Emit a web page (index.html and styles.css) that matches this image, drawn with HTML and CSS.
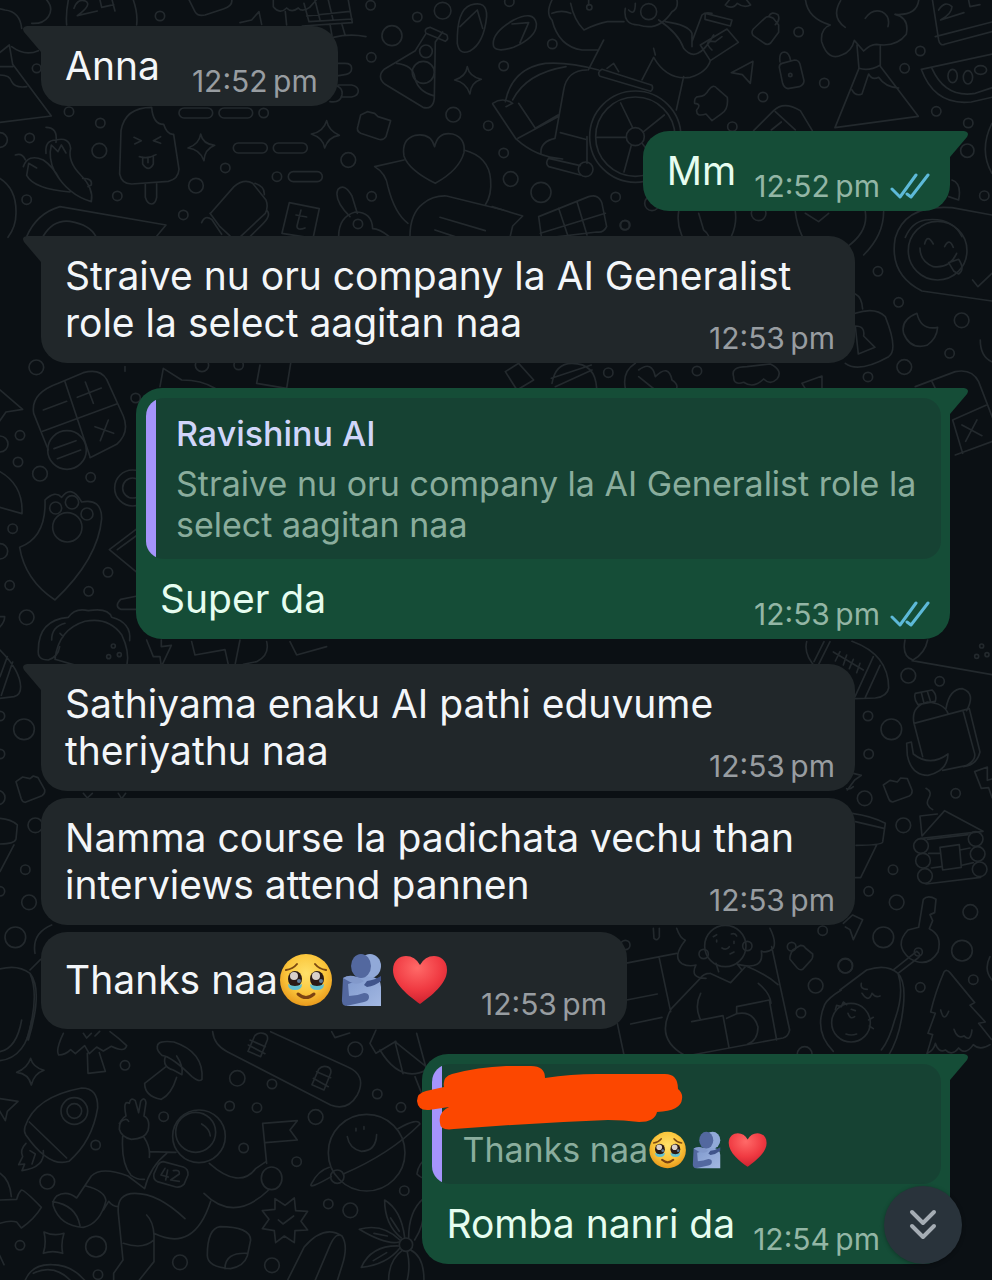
FILE: index.html
```html
<!DOCTYPE html>
<html lang="ta-Latn">
<head>
    <meta charset="UTF-8">
    <meta name="viewport" content="width=device-width, initial-scale=1.0">
    <title>Chat</title>
    <link rel="stylesheet" href="styles.css">
</head>
<body>
    <!-- Shared icons -->
    <svg class="defs" aria-hidden="true">
        <defs>
            <radialGradient id="skin" cx="50%" cy="38%" r="62%">
                <stop offset="0" stop-color="#ffe16a"/>
                <stop offset="0.6" stop-color="#fbc63c"/>
                <stop offset="1" stop-color="#e99a1c"/>
            </radialGradient>
            <radialGradient id="red" cx="45%" cy="25%" r="75%">
                <stop offset="0" stop-color="#ff6a68"/>
                <stop offset="0.6" stop-color="#f03a42"/>
                <stop offset="1" stop-color="#cf2230"/>
            </radialGradient>
            <linearGradient id="light" x1="0" y1="0" x2="1" y2="1">
                <stop offset="0" stop-color="#7e98cd"/>
                <stop offset="1" stop-color="#a3b8e2"/>
            </linearGradient>
        </defs>
        <symbol id="ticks" viewBox="0 0 40 26">
            <path d="M2 16l8 8L26 2M17 21l4 3L38 2" fill="none" stroke="#5db9d8" stroke-width="3" stroke-linecap="round" stroke-linejoin="round"/>
        </symbol>
        <symbol id="tearful" viewBox="0 0 57 54">
            <circle cx="28" cy="27" r="26" fill="url(#skin)"/>
            <path d="M8 17q7-1 11-6M48 17q-7-1-11-6" fill="none" stroke="#7c4a12" stroke-width="2" stroke-linecap="round"/>
            <ellipse cx="17" cy="26" rx="7" ry="8" fill="#2a1a16"/>
            <ellipse cx="39" cy="26" rx="7" ry="8" fill="#2a1a16"/>
            <circle cx="16" cy="23" r="4" fill="#d9d0ca"/>
            <circle cx="38" cy="23" r="4" fill="#d9d0ca"/>
            <circle cx="21" cy="28" r="2" fill="#5f7d9c"/>
            <circle cx="43" cy="28" r="2" fill="#5f7d9c"/>
            <path d="M10 31q7 4 14 0q0 6-7 6t-7-6zM32 31q7 4 14 0q0 6-7 6t-7-6z" fill="#62bfd0"/>
            <path d="M20 41q8 7 16 0" fill="none" stroke="#7c4312" stroke-width="3" stroke-linecap="round"/>
        </symbol>
        <symbol id="hug" viewBox="0 0 57 54">
            <ellipse cx="35" cy="13" rx="11" ry="12" fill="#91a9d8"/>
            <path d="M10 26q14-4 28-2q8 2 8 10v19H12z" fill="url(#light)"/>
            <ellipse cx="26" cy="13" rx="10" ry="12" fill="#53689f"/>
            <path d="M8 25q5-3 12-1l-1 5-6 2 1 12q8 0 15-3q5 0 5 4t-5 5l-18 4q-5-1-4-8z" fill="#53689f"/>
            <path d="M8 25q6-4 14-1l7 4q-6 5-14 1z" fill="#8299cb"/>
            <path d="M29 32l3-4q8-1 14-5v5q-6 5-14 6z" fill="#40548b"/>
        </symbol>
        <symbol id="heart" viewBox="0 0 57 54">
            <path d="M28 51C17 43 1 31 1 17C1 7 8 3 14 3q9 0 14 9q5-9 14-9c6 0 13 4 13 14c0 14-16 26-27 34z" fill="url(#red)"/>
        </symbol>
    </svg>

    <main class="chat">
        <!-- Wallpaper doodles -->
        <svg class="wallpaper" aria-hidden="true">
            <!-- upper left -->
            <g transform="scale(.3333)">
                <path d="M-40 30q20-10 55 0q45 5 50 55M130-10q35 30 15 60q-15 22-50 20M205 0q-8 40-5 75M400 0q14 40 10 75M222 25q10-30 34-22q22 10-24 44l60-14M300 0l5 22 36-8M335-5l10 38M565-5l20 40q8 15 30 10l55-18q30-10 25-30M720 68l35-8 22-25 8 38M820 0v20q20 25 40 4q15 16 35 0q12 14 34-2l20-22M856 35l4 40M912 10l15 55 130-8M945 0l15 60M985 0l14 58M920 48l130-14M1045 0l12 68-150 10M990 72l6 35M1025 70l10 34M1000 112q50-12 98-2"/>
                <circle cx="480" cy="48" r="14"/><circle cx="1112" cy="16" r="14"/><circle cx="1252" cy="51" r="14"/><circle cx="1328" cy="32" r="25"/><circle cx="1176" cy="107" r="30"/><circle cx="1114" cy="172" r="14"/><circle cx="110" cy="205" r="13"/><circle cx="207" cy="335" r="14"/><circle cx="301" cy="369" r="14"/><circle cx="89" cy="414" r="14"/><circle cx="298" cy="452" r="22"/><circle cx="0" cy="420" r="22"/><circle cx="676" cy="504" r="14"/><circle cx="588" cy="557" r="22"/><circle cx="352" cy="588" r="14"/><circle cx="80" cy="599" r="14"/><circle cx="550" cy="645" r="14"/><circle cx="791" cy="339" r="14"/><circle cx="1045" cy="480" r="22"/><circle cx="1360" cy="344" r="22"/><circle cx="1465" cy="377" r="14"/><circle cx="831" cy="530" r="14"/><circle cx="1115" cy="589" r="14"/>
                <!-- flip flop and flask -->
                <path d="M1372 130q-2-100 40-115q50-15 48 35q-8 80-50 103q-32 14-38-23zM1380 80l52-50 16 55M1290 82l50 22q8 12-4 20l-58-24q-8-14 12-18zM1276 104l-30 48-92 55q-25 22 0 45l115 70q30 8 34-26l3-170 22-30M1190 190q50 5 55 45q10 40 55 52"/>
                <circle cx="1278" cy="154" r="19"/><circle cx="1270" cy="217" r="33"/>
                <path d="M1402 200q6 30 42 38q-32 10-34 44q-10-34-46-42q34-10 38-40zM602 402q6 30 42 34q-30 12-32 46q-12-34-48-38q34-12 38-42zM980 362q6 30 38 44q-32 4-44 38q-4-30-40-42q36-6 46-40z"/>
                <path d="M1005 190h30q20 0 20 15t-16 18l-36 6M1015 255h40q20 4 20 18t-20 18h-30M990 305q30 5 36-20q4-20-16-28"/>
                <rect x="537" y="324" width="101" height="30" rx="15"/><rect x="657" y="324" width="101" height="30" rx="15"/><rect x="700" y="429" width="102" height="30" rx="15"/><rect x="820" y="429" width="102" height="30" rx="15"/><rect x="865" y="515" width="102" height="30" rx="15"/>
                <!-- ice cream -->
                <path d="M455 322q-80 0-92 70l-4 130q6 30 36 30l110-8q30-6 32-36l-16-105q-20 2-30-30q-32 0-36-51zM436 552v40q6 20 18 20t16-20v-42M402 412l22 10-20 10M482 410l-22 12 22 8M418 470q26 8 50-6M428 472v20q18 26 32 0v-25M444 472v16"/>
                <!-- chillies -->
                <path d="M138 382q36 0 30 45M138 460q-4-40 30-40q40-10 44 25q-10 40 30 80q40 40 32 80q-70-20-110-90q-20-40-10-80l20 20 10-20 14 24M46 465q20-8 30 14M70 500q14-40 60-20q30 20 50 60M80 526q20 40 130 50M80 526l6-36 24 14M248 535q30 0 26 20l-10 5"/>
                <path d="M-10 165l38-30 10 58 116 155-160 20M0 225q30 0 35 20q10 20 45 15M35 140q40 30 80 12M0 200h38M-10 530q60 30 58 110q0 40-24 72"/>
                <!-- lego and heart bubble -->
                <path d="M1082 345l20-10 22 5 10 10 38 12-14 48q-8 12-22 8l-54-18q-14-8-8-22zM1304 440q10-46 54-38q40 12 34 56q-14 52-86 92q-80-40-94-82q-8-50 34-62q46-8 58 34zM1212 480l-88 20q34 20 40 60q20 80 60 110M1392 450q76 20 80 90q4 45-16 75"/>
                <path d="M1230 710q0-70 40-100q30-24 70-22l170 42M1320 652l136 40M1305 690l60 20"/>
                <!-- luggage -->
                <path d="M80 710q30-70 100-90l318 55-30 36M130 708q30-50 80-44q60 10 78 46M632 640l70-80q30-25 56-10l40 50q8 20-2 40l-80 75M630 640l30 40 30 28M605 668q10-24 30-10l30 45M800 630q15 15-10 40l-40 40M765 550q30 10 28 34M868 608l90 18-18 85M868 608l-22 92 96 15M903 630l-12 48q0 15 24 6M888 645l32 6M1050 650q-50-50-36-82q20-20 42 20l16 52"/>
                <circle cx="1074" cy="672" r="14"/><path d="M1016 710q0-60 50-74q50 0 52 50q20 0 50 24"/>
            </g>
            <!-- upper right -->
            <g transform="translate(492 0) scale(.3333)">
                <path d="M5 140q-10-40 60-80q60-30 68 10q4 40-68 72q-50 16-60-2zM60 72l50-4-26 60M180 0q-20 40 0 60q20 80 90 90h50M236 10q10 50 40 80q40-20 70-25h50M180 40q30-12 56 0M400 25q-8 50 40 50q60 20 100-40q20-10 15-35M500 60q60 40 75 85q40 50 90-40M520 65q70 10 80 35v40M600 125l30-80q10-10 30-5M640 40l80 20-5 18-76-20zM625 135l80-48 34 40-84 55zM660 150q-30-30 10-25l20-15M335 120l-46 90M450 240l35-68q40 70 110 60q50-16 60-50M575 230l-22 100M490 165l-5-20"/>
                <path d="M290 15v-15M410 30q20 20 20-20"/><circle cx="470" cy="35" r="24"/><circle cx="292" cy="22" r="8"/><circle cx="52" cy="5" r="14"/>
                <circle cx="181" cy="132" r="14"/><circle cx="35" cy="198" r="14"/><circle cx="35" cy="459" r="14"/><circle cx="56" cy="537" r="22"/><circle cx="147" cy="577" r="30"/><circle cx="371" cy="591" r="14"/><circle cx="398" cy="676" r="14"/><circle cx="920" cy="96" r="14"/><circle cx="997" cy="249" r="14"/><circle cx="813" cy="291" r="14"/><circle cx="721" cy="380" r="14"/><circle cx="1285" cy="153" r="14"/><circle cx="1238" cy="205" r="14"/><circle cx="1333" cy="334" r="14"/><circle cx="1429" cy="369" r="14"/><circle cx="1426" cy="452" r="20"/><circle cx="1477" cy="587" r="14"/><circle cx="800" cy="640" r="22"/><circle cx="480" cy="610" r="22"/>
                <!-- wheelchair -->
                <circle cx="430" cy="410" r="137"/><circle cx="430" cy="410" r="119"/><circle cx="430" cy="410" r="27"/>
                <path d="M422 383l-36-74M455 395l62-50M403 412h-90M418 436l-22 80M450 430l40 50M40 305q20-100 120-115q70-5 160 20M62 300q40-80 160-100M2 310q30-20 60 0l-20 10M80 310l50 75 68-40M2 312l70 105q60 55 140 60M78 415l120-65M330 208l150 48q5 12-4 18l-152-45q-10-12 6-21zM345 205l20-15 15 25M215 270q10-60 70-60M215 270l-26 145q-45 10-42 45M205 398l75 20M285 410v80M170 475q-12 14 0 25l95 25M170 475l95 22"/>
                <circle cx="281" cy="508" r="22"/>
                <!-- locks, puzzle, plane -->
                <path d="M818 55q10-10 26 0l16 20v22l-24 32q-10 8-20 0l-32-22q-8-10 0-20zM830 50q8-18 28-6q8 16-8 30M870 190l38-10q12 0 16 12l12 50q0 12-14 18l-34 6q-12-2-16-16l-10-48q0-10 8-12zM864 186q-4-30 14-30q14 2 18 26M718 218l65-34-8 66-24-26zM620 290q20 0 30-20q14-20 26-4l30 26q4 36-16 48l-30 22-18-20q-30 10-28-12q16-18-6-20q-2-20 12-20zM700 15l20-25M704 18q20 10 32-8q20 15 40 5l-20-25"/>
                <circle cx="895" cy="225" r="5"/>
                <!-- tree on the hill -->
                <path d="M940-5q5 60 75 80q-30 10-26 50q20 60 60 40q30-10 38-44l28 32q20-20 38-20q60 10 90-30q10-50-34-60q70 5 72-50M1060 82q-44-30-14-80M1120 55q20-30 50-20q26 14 18 45M1095 135l6 70-72 178 250-34-114-150v-60M1101 205q30 10 64-10M1080 270q10 20 30 12l20-60q10 20 30 10q20 30 60 32"/>
                <!-- melon and cake -->
                <path d="M1320-10l20 130q4 20 20 12l150-40M1330 110l170-44M1340 30q20-30 40-10q0 20-34 40l70-22M1430 0l4 20 30-6M1288 208l232-50M1288 208q40 110 150 98l70-16M1320 205q40 90 130 75l60-20"/>
                <ellipse cx="1382" cy="228" rx="14" ry="20"/><ellipse cx="1428" cy="232" rx="14" ry="20"/><ellipse cx="1466" cy="210" rx="18" ry="13"/>
                <!-- chocolate and fire -->
                <path d="M785 392l60-60q30-30 80 0l36 60M850 335l60 55M838 390l30-24M0 620l92 28-30 30-8 34M140 650l150-60q30-10 40 20l14 70q-10 20-30 16l-165 20zM200 625l30 90M255 605l30 100M145 700l195-60M560 635q-10 60 40 120M620 640l15 50q30 20 20 90M730 635q10 70-60 140M910 635q10 80 60 130M940 640l40 25 30-25M1120 635q10 60-55 106M1175 635q0 70-60 130M1380 540q30 10 20 60l-30-10M1500 370q-40 80 0 150"/>
                <!-- smiling balloon -->
                <path d="M1500 645l-120-22q-140-10-170 90q-20 110 80 160l210 30M1240 712q20-46 60-52q80-10 110 50"/>
            </g>
            <!-- right side, moon and padlock -->
            <g transform="translate(492 220) scale(.3333)">
                <circle cx="1337" cy="92" r="88"/>
                <path d="M1298 72q8-32 26 0M1358 80q14-28 26 2M1284 84q0 40 40 56q50 6 70-40M1370 128l30-10q20 30 0 44l-14-8zM1442 180l16 20 42-40M1090 222q20 10 22 45M1090 280q60-20 90 10q40 100 10 120q-90 50-130 20M1090 318q30 0 25 30l34 34-50 20zM1275 280q-50 20-40 60q20 50 70 36q30-20 32-54q-50 10-62-42zM1465 360q0 60 50 70"/>
                <circle cx="1158" cy="154" r="14"/><circle cx="1220" cy="247" r="14"/><circle cx="1409" cy="301" r="22"/><circle cx="1373" cy="400" r="14"/><circle cx="1237" cy="441" r="22"/><circle cx="1128" cy="471" r="14"/><circle cx="349" cy="458" r="14"/><circle cx="615" cy="453" r="14"/><circle cx="400" cy="15" r="14"/>
                <path d="M40 455l40-25 45 50-50 30zM180 490q10-60 60-60q70 0 74 75M190 500l110-50M178 475l120-40M400 505q-10-50 30-75M440 450q40-30 50 20q40-40 50 10q30 20 0 40M440 470l50 40M725 470q-10-30 40-30l70-8q40 20 20 45q-20 20-40 0q-30 30-60 10q-30 10-30-17M930 490l60-22v38M930 490l10 16"/>
                <!-- second calculator -->
                <path d="M1270 500l120-45q50-10 70 30l50 130M1320 485l10 20M1382 600l100-44M1382 600l30 100M1390 705l110-40M1410 615l60 32M1455 600l-34 64"/>
            </g>
            <!-- left column, calculator, paw, taco -->
            <g transform="translate(0 360) scale(.3333)">
                <path d="M175 70l75-32q50-14 70 20l50 110q20 50-20 85l-80 40M145 270l-44-110q-10-60 74-90M195 65l75 225M128 214l222-82M130 150l70-26M232 112l72-28M256 66l24 64M285 200l56 20M325 180l-24 62M162 266l66-24M172 296l70-26M0 90l68 58-50 8-24 34M0 335q70 40 66 126l-70-20"/>
                <circle cx="201" cy="270" r="58"/>
                <path d="M135 420q30-30 50-8q30-40 60 14q60-12 60 50q-10 120-140 244q-90-60-106-158q80-30 76-142z"/>
                <circle cx="202" cy="502" r="44"/><circle cx="167" cy="444" r="18"/><circle cx="216" cy="427" r="20"/><circle cx="261" cy="462" r="18"/>
                <circle cx="109" cy="22" r="22"/><circle cx="407" cy="114" r="14"/><circle cx="60" cy="226" r="14"/><circle cx="54" cy="306" r="14"/><circle cx="120" cy="341" r="22"/><circle cx="0" cy="252" r="24"/><circle cx="272" cy="352" r="14"/><circle cx="38" cy="506" r="14"/><circle cx="0" cy="574" r="23"/><circle cx="324" cy="637" r="14"/><circle cx="29" cy="676" r="14"/><circle cx="266" cy="694" r="14"/><circle cx="80" cy="772" r="22"/><circle cx="398" cy="384" r="54"/><circle cx="398" cy="384" r="30"/><circle cx="606" cy="15" r="20"/><circle cx="716" cy="15" r="14"/>
                <path d="M412 505l-84 64 90 74M412 525l-60 44M412 708l-50 10q-20 20 0 30h50"/>
                <path d="M165 898q10-90 90-114q70-14 110 40q24 50 16 90M165 898l55 16M115 870q0-90 90-98q20-30 60-20q60-10 70 20q60 16 54 70M115 870q-4 30 30 30q30-10 34-40M155 840q0-40 40-50M180 820l10 10"/>
                <circle cx="340" cy="858" r="6"/><circle cx="326" cy="890" r="6"/><circle cx="358" cy="884" r="6"/>
                <path d="M480 80l10-55 55 35q60 0 100 25M780 15l-10 55 90 15 12-75M375 20v14M440 840l20 50h20l4 30 30-64-30 4v-20M575 845l10 40 90-16 10 45M720 840l-14 70M800 845q10 40-30 60l-40 8M870 845l20 40 90-25M-10 770h24q0 20-24 40"/>
            </g>
            <!-- middle left edge -->
            <g transform="translate(0 640) scale(.3333)">
                <path d="M0 30q60 60 62 110q0 25-20 30l-50 6M38 66l-34 100M22 50l-22 60M48 425l20-14 22 5 10-8 14 5 20 36q2 12-8 18l-50 20q-8 0-12-10zM-10 535q40 0 62 20l-4 42q-4 15-50 15M42 615l-42 80M105 940q-10-60 50-85M-10 990q60-20 100 10q30 70-10 200M90 1000q40 50-5 200M90 990l32-32M250 460l12 14 15-14M355 460l10 16 12-16"/>
                <circle cx="72" cy="268" r="31"/><circle cx="0" cy="228" r="14"/><circle cx="0" cy="342" r="14"/><circle cx="-6" cy="473" r="21"/><circle cx="106" cy="556" r="22"/><circle cx="76" cy="689" r="14"/><circle cx="0" cy="754" r="14"/><circle cx="87" cy="787" r="22"/><circle cx="46" cy="892" r="31"/>
            </g>
            <!-- lower left, rocket, astronaut, planet -->
            <g transform="translate(0 1020) scale(.3333)">
                <path d="M92 115q6 26 40 36q-30 10-38 44q-8-34-44-38q32-12 42-42zM0 122q80-10 95-122M0 95q50-10 65-95M0 236l54 8-32 30-6 28-20-34M190 40q-24 50-14 65q20 0 36-16l14 12 28-24 14 24 22-20 20 12 24-14q40 20 46-2q-20-20-50-42M262 100l2 60 52-6-18-56M250 40l10 14 14-14M285 48l14-14"/>
                <!-- rocket -->
                <path d="M75 320q30-90 170-116q50 0 48 60q-16 100-86 160q-60 20-130-80q-6-10-2-24zM88 306l112 108M78 370q-20 20-10 40l-12 24 18-2-8 20q70-10 64-60M90 392l16 10-10 30"/>
                <circle cx="223" cy="273" r="40"/><circle cx="223" cy="273" r="22"/>
                <!-- mushroom -->
                <path d="M472 80q0-20 50-14q90 30 84 112q-8 10-30-8q-60-60-90-64q-16-14-14-26zM496 110q-10 30 24 40l26 14M530 108q20 30 16 54M498 140l-64 50q0 40 50 48q30-14 46-66"/>
                <!-- skateboard -->
                <path d="M638 35q4 40 44 60l310 160q50 20 80-30q30-60-30-85L812 35M790 40q16 4 12 20l-20 50-38-16 20-46q10-12 26-8zM745 75l50 26M980 140q16 4 12 20l-20 50-36-16 20-46q10-12 24-8zM940 175l45 25M750 60l46 20M950 155l42 18"/>
                <!-- astronaut -->
                <circle cx="597" cy="349" r="79"/><circle cx="587" cy="337" r="60"/>
                <path d="M605 312q24 14 26 36M388 250q4-20 18-8l10 36 6-34q12-16 16 4l-6 40q20 10 12 44q-10 26-50 26q-30-6-36-30q0-30 20-40q-10-50 10-38zM358 310q20-20 28-6M368 350q-5 80 25 116q20 14 40 12M432 352q20 30 16 60M448 395l80 2M500 400q-50 40-66 106l-50-38q-80-30-110 0l-44 66q-30-24-60-6q-14 14-10 30q20 60 90 64q50-10 68-80q-4-30-60-44M310 570l16-26q12 16 28 16M355 580q-6-60 50-60q70 0 150 76M355 580l14 140-28 40v30M370 670q60 20 92-10M440 585q20 20 22 60v80l-44 55M462 640q120 60 170-96M612 520q90 90 194-10M628 430q90 80 140 15l30-20M158 545q70 10 82 72"/>
                <path d="M490 425l60 16q16 6 14 24l-12 28q-8 10-24 8l-56-16q-14-8-10-24l12-26q6-10 16-10zM495 445l-12 20 22 6M503 450l-6 30M520 452q20-4 18 10l-26 18 26 4"/>
                <path d="M788 310l104-8-22 28 22 30-96 8M788 310l12 120"/><ellipse cx="815" cy="475" rx="31" ry="34"/>
                <!-- planet -->
                <circle cx="1100" cy="398" r="115"/><circle cx="1012" cy="470" r="20"/>
                <path d="M1030 462q140-60 230-150q-6-20-66 14M994 470q-70 40-60 22q20-40 54-50M1042 350q6 36 42 44q44 0 46-50M1068 325v8M1092 320v8"/>
                <!-- star badge and flower -->
                <path d="M825 536l30 20 28-22 4 38 36 2-20 30 20 26-38 2-2 36-30-20-26 20-4-36-36-6 20-28-20-26 38-4zM835 600l14 12 32-24"/>
                <circle cx="1218" cy="674" r="20"/>
                <path d="M1204 654q-50-40-50-114q50 30 60 112M1226 654q0-80 44-118q10 70-26 124M1198 666q-40 10-120-38q70-20 124 34M1200 684q-40 50-116 58q30-66 112-64M1206 692q-40 30-40 90M1222 696q10 40 0 84M1232 690q40 20 40 90M1172 594l26 40M1122 640l40 8M1120 722l40-24"/>
                <path d="M660 620q90 0 92 40l-10 48q-10 30-50 38q-70-4-70-40q0-80 38-86zM675 746q0-50 68-46M862 782l50-100q60-70 114-34q20 30 0 90l-14 44M945 782l46-108q14-30 26-28M132 636q30 14 60 4q-10 30-4 60q-30-10-58 0q10-30 2-64zM0 460q30 20 34 70M0 540l50-2q4-18 14-28q10 0 60 52q-20 34-60 62l-14-18q-20-6-50 4M75 782q20-50 80-48q60 0 100 48M100 760q60-30 110 20M-4 700l16 34"/>
                <circle cx="375" cy="136" r="14"/><circle cx="712" cy="175" r="23"/><circle cx="816" cy="192" r="14"/><circle cx="689" cy="258" r="14"/><circle cx="771" cy="263" r="14"/><circle cx="491" cy="290" r="14"/><circle cx="287" cy="375" r="14"/><circle cx="731" cy="384" r="14"/><circle cx="890" cy="425" r="14"/><circle cx="947" cy="291" r="22"/><circle cx="1066" cy="88" r="22"/><circle cx="1132" cy="222" r="14"/><circle cx="1203" cy="262" r="14"/><circle cx="142" cy="485" r="22"/><circle cx="60" cy="676" r="14"/><circle cx="288" cy="680" r="31"/><circle cx="294" cy="764" r="14"/><circle cx="540" cy="727" r="22"/><circle cx="816" cy="736" r="22"/><circle cx="985" cy="552" r="14"/><circle cx="1051" cy="571" r="22"/><circle cx="1213" cy="512" r="14"/>
                <path d="M995 35l10 18 44-14M1110 70l18 30 60-36M1128 30l-18 40M1140 90q60 100 140 60M1185 65l100 80M1185 65l24 96M1250 40l30 110M1245 170l20 50M1285 410q-30 20-34 52q20 20 34 8"/>
            </g>
            <!-- right column -->
            <g transform="translate(840 640) scale(.3333)">
                <path d="M-100 5q-10 40 30 80M-30 5l-40 80M-48 5l-30 60M36 4q110 40 110 140q-4 25-40 30l-60 2M100 50l-55 120M120 76l-44 96M-20 36l90 54M0 35l-14 28M20 45l-10 30M40 58l-12 28M60 70l-10 28M195 0q-10 50 24 60q36-20 44-60M216 62l240 42"/>
                <circle cx="425" cy="18" r="6"/><circle cx="410" cy="49" r="6"/><circle cx="441" cy="44" r="6"/>
                <path d="M226 160l50-10q16 14 10 34l-52 10q-14-18-8-34zM244 158l8 32M262 154l10 32M222 250q-10-50 40-64q50 4 62 34M222 250l166-44M222 250l26 100M318 206q10-60 50-60q40 14 12 66M370 215l34 126q4 20-26 36l-70 14M388 206l32 130q-10 40-50 44M200 310l14-4 6 36q50 40 104 0q0 50-60 64q-50 0-62-60z"/>
                <path d="M130 435l20-14 22 5 10-12 20 2 14 34q2 12-8 18l-50 18q-8 0-12-10zM404 395l38-14v40l14-4M404 395l20 50 22-2 10 30M258 445q20 10 8 30t12 34M240 528l52-6M240 528l6 60 68-76 115 62-190 22"/>
                <circle cx="243" cy="618" r="22"/><circle cx="249" cy="662" r="22"/><circle cx="255" cy="708" r="22"/><circle cx="407" cy="597" r="22"/><circle cx="413" cy="642" r="22"/><circle cx="419" cy="688" r="22"/>
                <path d="M262 598l122-14M266 640h34M360 630l30-6M274 684l30-4M366 676l34-8M258 732l164-20M300 622l58-8 6 68-56 8zM36 520q60 8 100 30l-8 56q-4 10-80 10M46 545l86 20M110 615l-48 98H46M40 440q-10 10-20 6M40 400l24 6-20 14-22 30M10 850l28-25 30 14-28 60-10-30-14-8"/>
                <!-- key and tree -->
                <path d="M236 862l14-84q14-14 38 0l-4 40-14 6 8 18-10 24q40 20 26 70q-30 50-84 20q-50-40-6-86zM160 990l70-56q16 10 4 20l-60 46"/><circle cx="235" cy="936" r="12"/>
                <path d="M272 1116q14-60 40-120q8-10 18 2l74 90-14 8 46 50-20 4 38 48M272 1116l14 4-22 60 14 4-18 60M302 1110q10 40 24 4M342 1168q10 30 30 20q20 20 24-18M262 1240q20-10 24-30q10 30 30 20q20 20 40-6q20 24 44-10q20 20 50 0"/>
                <path d="M0 1050l80-60q60-20 94 10q30 30 10 140q-10 60-40 110M174 1000q20 60-10 140q-16 60-40 90M64 1030q-4 18 18 18M66 1060q20 30 30 0q10 14 24 8M450 950q-20 40 6 70"/>
                <circle cx="205" cy="107" r="22"/><circle cx="299" cy="124" r="14"/><circle cx="84" cy="228" r="14"/><circle cx="154" cy="268" r="31"/><circle cx="86" cy="342" r="14"/><circle cx="74" cy="475" r="22"/><circle cx="347" cy="460" r="14"/><circle cx="190" cy="556" r="22"/><circle cx="159" cy="689" r="14"/><circle cx="86" cy="754" r="14"/><circle cx="170" cy="787" r="22"/><circle cx="130" cy="892" r="31"/><circle cx="391" cy="816" r="22"/><circle cx="366" cy="932" r="31"/><circle cx="400" cy="1019" r="14"/><circle cx="241" cy="1042" r="14"/><circle cx="16" cy="978" r="21"/>
            </g>
            <!-- reader and avocado -->
            <g transform="translate(610 920) scale(.3333)">
                <path d="M45 130l155-30M50 240l92-18M62 312l94-20M148 115l34 160M22 310l20 95M130 25l2 30q10 10 16-4v-26M200 25q10 30 26 36q-40 50-10 70q20 10 42 4q-20 40 30 40M480 25q20 40 10 60q-20 16-36 8q10 60-70 40M485 80l54 250q-4 20-20 24l-290 54M300 160l62 28 46-50q60 24 96 56M300 160q-20 0-30 16l-86 90q-50 90 40 140M272 220q-20 40 0 80M245 305l94-18 18 96M350 295l30-14q50-10 64 40q0 40-32 52M380 280v-20l98-20 22 120M445 190q36 30 38 60M326 155l-8-25M380 130l14 18"/>
                <circle cx="346" cy="78" r="62"/><circle cx="281" cy="102" r="14"/><circle cx="412" cy="78" r="14"/>
                <path d="M310 50l10-6M364 42q12-4 16 6M320 60v6M372 64v6M336 84q14 8 22-4M360 102l12-6"/>
                <path d="M548 90l24-14q10 0 14 8l22 18q2 12-6 20l-24 26q-8 4-16-4l-22-26q-2-10 8-28z"/><circle cx="545" cy="80" r="13"/>
                <circle cx="46" cy="75" r="14"/><circle cx="638" cy="32" r="14"/><circle cx="706" cy="137" r="22"/><circle cx="617" cy="197" r="22"/><circle cx="573" cy="279" r="14"/><circle cx="584" cy="402" r="22"/>
                <path d="M670 394q-60-60-26-140q10-20 50-44"/>
                <circle cx="723" cy="308" r="58"/><path d="M676 270l4-14 14 4 6-14 10 8M776 300l14-8M778 318l12 8M708 342q16 6 32 0M714 280q6 20 20 10M724 268l12 4"/>
            </g>
        </svg>

        <div class="group incoming">
            <div class="bubble tail">
                <p class="text">Anna<time class="time">12:52&#8239;pm</time></p>
            </div>
        </div>

        <div class="group outgoing">
            <div class="bubble tail">
                <p class="text">Mm<span class="time"><time>12:52&#8239;pm</time><svg class="ticks" role="img" aria-label="Read"><use href="#ticks"/></svg></span></p>
            </div>
        </div>

        <div class="group incoming">
            <div class="bubble tail">
                <p class="text">Straive nu oru company la AI Generalist role la select aagitan naa<time class="time">12:53&#8239;pm</time></p>
            </div>
        </div>

        <div class="group outgoing">
            <div class="bubble tail">
                <blockquote class="quote">
                    <p class="quote-name">Ravishinu AI</p>
                    <p class="quote-text">Straive nu oru company la AI Generalist role la select aagitan naa</p>
                </blockquote>
                <p class="text">Super da<span class="time"><time>12:53&#8239;pm</time><svg class="ticks" role="img" aria-label="Read"><use href="#ticks"/></svg></span></p>
            </div>
        </div>

        <div class="group incoming">
            <div class="bubble tail">
                <p class="text">Sathiyama enaku AI pathi eduvume theriyathu naa<time class="time">12:53&#8239;pm</time></p>
            </div>
            <div class="bubble">
                <p class="text">Namma course la padichata vechu than interviews attend pannen<time class="time">12:53&#8239;pm</time></p>
            </div>
            <div class="bubble">
                <p class="text with-emoji">Thanks naa<svg class="emoji" aria-hidden="true"><use href="#tearful"/></svg><svg class="emoji" aria-hidden="true"><use href="#hug"/></svg><svg class="emoji" aria-hidden="true"><use href="#heart"/></svg><time class="time">12:53&#8239;pm</time></p>
            </div>
        </div>

        <div class="group outgoing">
            <div class="bubble tail">
                <blockquote class="quote">
                    <p class="quote-name">
                        <svg class="scribble" viewBox="0 0 267 66" aria-hidden="true">
                            <path d="M10 26L28 22Q26 12 36 9Q62 2 90 1H115Q129 1 129 13Q155 9 181 9H249Q262 9 262 24Q267 28 266 34Q265 46 241 47Q239 57 223 57Q208 55 192 55Q115 58 38 64Q24 66 24 58Q22 47 33 42L13 45Q2 46 1 36Q1 28 10 26Z" fill="#fc4700"/>
                        </svg>
                    </p>
                    <p class="quote-text">Thanks naa<svg class="emoji" aria-hidden="true"><use href="#tearful"/></svg><svg class="emoji" aria-hidden="true"><use href="#hug"/></svg><svg class="emoji" aria-hidden="true"><use href="#heart"/></svg></p>
                </blockquote>
                <p class="text">Romba nanri da<span class="time"><time>12:54&#8239;pm</time><svg class="ticks" role="img" aria-label="Read"><use href="#ticks"/></svg></span></p>
            </div>
        </div>

        <button class="scroll-down" type="button" aria-label="Scroll to latest">
            <svg viewBox="0 0 28 32" width="28" height="32" aria-hidden="true">
                <path d="M3 3l11 11L25 3M3 17l11 11L25 17" fill="none" stroke="#a5adb4" stroke-width="4" stroke-linecap="round" stroke-linejoin="round"/>
            </svg>
        </button>
    </main>
</body>
</html>
```
FILE: styles.css
```css
* {
    box-sizing: border-box;
}
body {
    margin: 0;
    background-color: #0b1014;
    font-family: Inter, "Liberation Sans", sans-serif;
}
p, blockquote {
    margin: 0;
}
.defs {
    position: absolute;
    width: 0;
    height: 0;
}
.chat {
    position: relative;
    display: flex;
    flex-direction: column;
    gap: 25px;
    min-height: 100vh;
    padding: 26px 42px 14px 41px;
    overflow: hidden;
}
.wallpaper {
    position: absolute;
    top: 0;
    left: 0;
    width: 100%;
    height: 100%;
    fill: none;
    stroke: #23292d;
    stroke-width: 5;
    stroke-linecap: round;
    stroke-linejoin: round;
}
.group {
    position: relative;
    display: flex;
    flex-direction: column;
    align-items: flex-start;
    gap: 7px;
}
.outgoing {
    align-items: flex-end;
}
.bubble {
    position: relative;
    display: flow-root;
    max-width: 814px;
    padding: 16px 20px 10px 24px;
    border-radius: 26px;
    background-color: #21272a;
    color: #f3f6f9;
}
.outgoing .bubble {
    background-color: #154d37;
    color: #e6fdf0;
}
.incoming .tail {
    border-top-left-radius: 0;
}
.outgoing .tail {
    border-top-right-radius: 0;
}
.tail::before {
    content: "";
    position: absolute;
    top: 0;
    right: 100%;
    width: 18px;
    height: 26px;
    background-color: inherit;
    clip-path: path("M18 0H4Q-2 1 1 6L18 26Z");
}
.outgoing .tail::before {
    right: auto;
    left: 100%;
    transform: scaleX(-1);
}
.text {
    font-size: 39px;
    line-height: 47px;
}
.time {
    float: right;
    display: flex;
    align-items: center;
    margin: 24px 0 0 32px;
    font-size: 30px;
    line-height: 30px;
    color: #989da1;
}
.outgoing .time {
    margin-left: 18px;
    color: #93b6a5;
}
.ticks {
    width: 40px;
    height: 26px;
    margin-left: 10px;
}
.with-emoji {
    line-height: 63px;
}
.with-emoji .time {
    margin-top: 41px;
}
.emoji {
    width: 57px;
    height: 54px;
    vertical-align: -13px;
}
.quote {
    margin: -6px -11px 16px -14px;
    padding: 15px 20px 14px 30px;
    border-radius: 18px;
    background: linear-gradient(to right, #a594fb 10px, #164233 10px);
}
.quote-name {
    position: relative;
    height: 42px;
    margin-bottom: 8px;
    font-size: 34px;
    font-weight: 500;
    line-height: 42px;
    color: #d0d6fa;
}
.quote-text {
    font-size: 34px;
    line-height: 41px;
    color: #8aad9d;
}
.quote-text .emoji {
    width: 40px;
    height: 38px;
    vertical-align: -7px;
}
.scribble {
    position: absolute;
    top: -14px;
    left: -46px;
    width: 267px;
    height: 66px;
}
.scroll-down {
    position: absolute;
    right: 30px;
    bottom: 16px;
    display: flex;
    align-items: center;
    justify-content: center;
    width: 78px;
    height: 78px;
    padding: 0;
    border: none;
    border-radius: 50%;
    background-color: #29333b;
    box-shadow: 0 1px 4px rgba(0, 0, 0, 0.3);
    cursor: pointer;
}
```
